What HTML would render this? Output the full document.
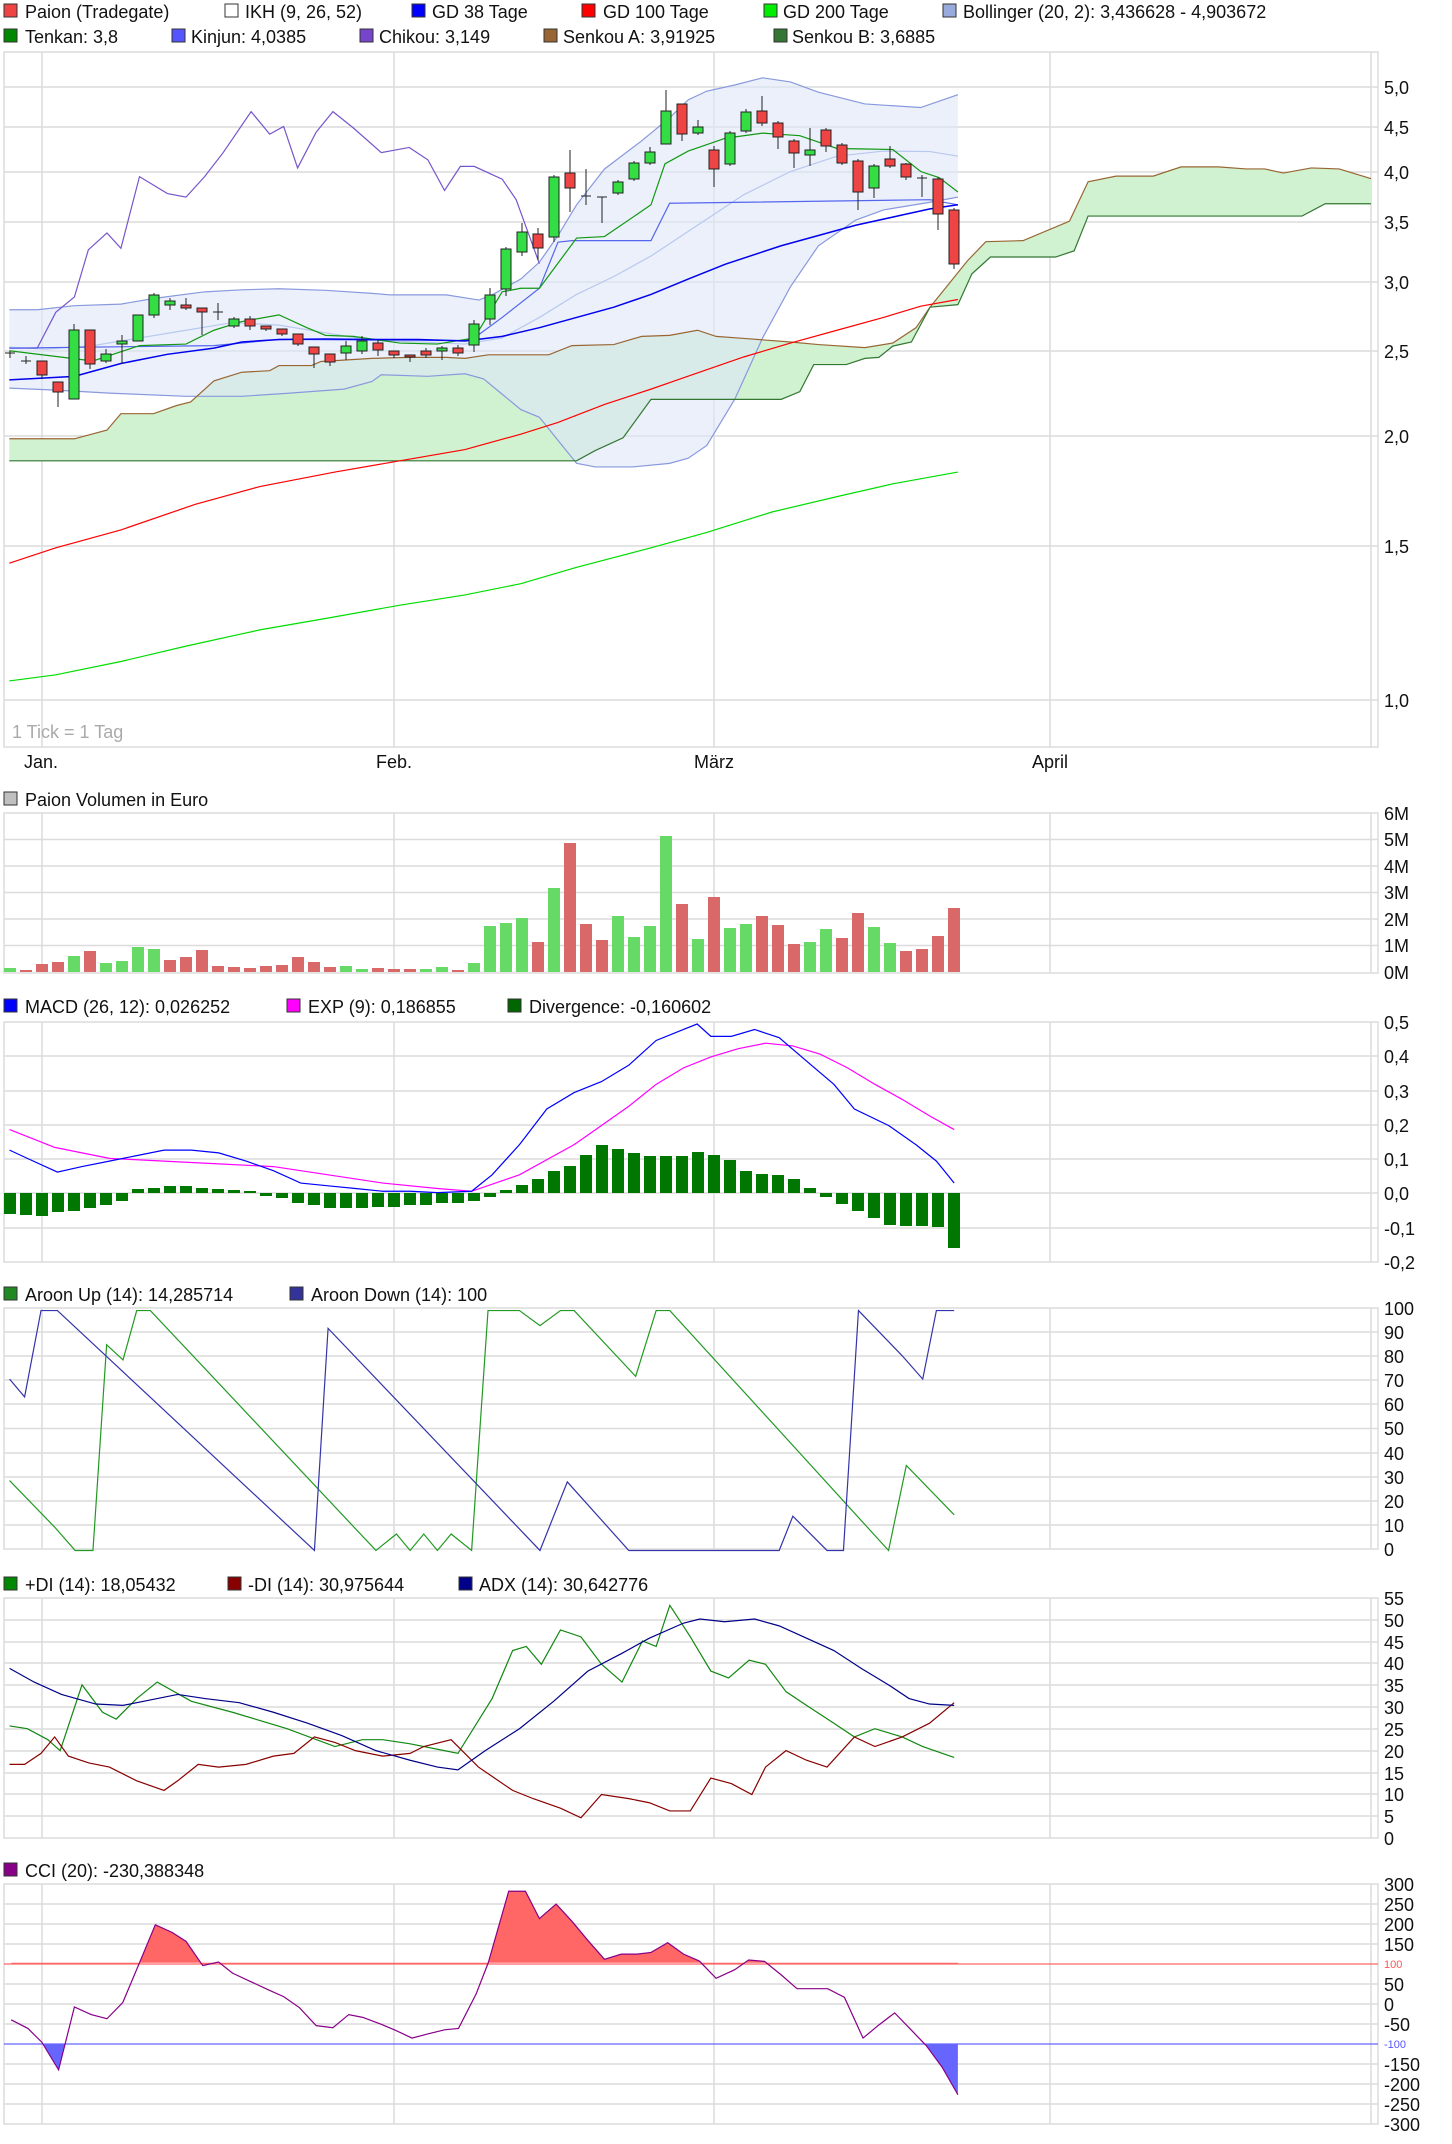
<!DOCTYPE html>
<html><head><meta charset="utf-8"><style>
html,body{margin:0;padding:0;background:#fff}
svg{display:block}
text{font-family:"Liberation Sans",Arial,sans-serif;font-size:18px;fill:#111}
.g{stroke:#dcdcdc;stroke-width:1.5;fill:none}
.ln{fill:none;vector-effect:non-scaling-stroke;stroke-width:1.2}
.ax{dominant-baseline:central}
</style></head><body>
<svg width="1452" height="2144" viewBox="0 0 1452 2144" xmlns="http://www.w3.org/2000/svg">
<defs>
<clipPath id="cm"><rect x="4" y="52" width="1367" height="695"/></clipPath>
<clipPath id="cciU"><rect x="0" y="1884" width="1378" height="80"/></clipPath>
<clipPath id="cciD"><rect x="0" y="2044" width="1378" height="80"/></clipPath>
</defs>

<!-- legend main -->
<g>
<rect x="4" y="4" width="13" height="13" fill="#ee4444" stroke="#333"/><text x="25" y="18">Paion (Tradegate)</text>
<rect x="225" y="4" width="13" height="13" fill="#fff" stroke="#333"/><text x="245" y="18">IKH (9, 26, 52)</text>
<rect x="412" y="4" width="13" height="13" fill="#0000ff" stroke="#333"/><text x="432" y="18">GD 38 Tage</text>
<rect x="582" y="4" width="13" height="13" fill="#ff0000" stroke="#333"/><text x="603" y="18">GD 100 Tage</text>
<rect x="764" y="4" width="13" height="13" fill="#00ee00" stroke="#333"/><text x="783" y="18">GD 200 Tage</text>
<rect x="943" y="4" width="13" height="13" fill="#99aadd" stroke="#333"/><text x="963" y="18">Bollinger (20, 2): 3,436628 - 4,903672</text>
<rect x="4" y="29" width="13" height="13" fill="#008800" stroke="#333"/><text x="25" y="43">Tenkan: 3,8</text>
<rect x="172" y="29" width="13" height="13" fill="#5555ff" stroke="#333"/><text x="191" y="43">Kinjun: 4,0385</text>
<rect x="360" y="29" width="13" height="13" fill="#7744cc" stroke="#333"/><text x="379" y="43">Chikou: 3,149</text>
<rect x="544" y="29" width="13" height="13" fill="#996633" stroke="#333"/><text x="563" y="43">Senkou A: 3,91925</text>
<rect x="774" y="29" width="13" height="13" fill="#337733" stroke="#333"/><text x="792" y="43">Senkou B: 3,6885</text>
</g>

<!-- main frame -->
<rect x="4" y="52" width="1374" height="695" class="g"/>
<g class="g">
<line x1="4" y1="87" x2="1378" y2="87"/><line x1="4" y1="127" x2="1378" y2="127"/><line x1="4" y1="172" x2="1378" y2="172"/><line x1="4" y1="222" x2="1378" y2="222"/><line x1="4" y1="282" x2="1378" y2="282"/><line x1="4" y1="351" x2="1378" y2="351"/><line x1="4" y1="436" x2="1378" y2="436"/><line x1="4" y1="546" x2="1378" y2="546"/><line x1="4" y1="700" x2="1378" y2="700"/>
<line x1="42" y1="52" x2="42" y2="747"/><line x1="394" y1="52" x2="394" y2="747"/><line x1="714" y1="52" x2="714" y2="747"/><line x1="1050" y1="52" x2="1050" y2="747"/><line x1="1371" y1="52" x2="1371" y2="747"/>
</g>
<g class="ax"><text x="1384" y="88" class="ax">5,0</text><text x="1384" y="128" class="ax">4,5</text><text x="1384" y="173" class="ax">4,0</text><text x="1384" y="223" class="ax">3,5</text><text x="1384" y="283" class="ax">3,0</text><text x="1384" y="352" class="ax">2,5</text><text x="1384" y="437" class="ax">2,0</text><text x="1384" y="547" class="ax">1,5</text><text x="1384" y="701" class="ax">1,0</text></g>
<text x="12" y="738" style="fill:#aaa">1 Tick = 1 Tag</text>
<text x="24" y="768">Jan.</text><text x="394" y="768" text-anchor="middle">Feb.</text><text x="714" y="768" text-anchor="middle">März</text><text x="1050" y="768" text-anchor="middle">April</text>

<g clip-path="url(#cm)">
<g transform="matrix(0.93,0,0,0.512,0,0)">
<!-- cloud -->
<path fill="#d0f2d0" stroke="none" d="M10,857 L80,857 115,840 130,808 165,808 190,792 205,785 230,744 260,727 290,724 300,714 335,714 345,706 400,700 440,698 480,698 500,700 525,693 590,693 615,675 660,673 690,657 720,655 750,645 770,657 800,661 850,668 880,673 930,679 960,670 985,640 1000,600 1040,510 1060,472 1100,470 1150,432 1170,355 1200,344 1240,344 1270,326 1310,326 1340,330 1360,330 1380,338 1410,328 1440,330 1480,352 L1480,398 1425,398 1400,422 1170,422 1155,490 1135,502 1065,502 1045,535 1030,595 1000,600 980,668 960,676 945,698 930,700 910,712 875,712 860,765 840,780 700,780 670,855 640,880 620,900 10,900 Z"/>
<!-- bollinger band -->
<path fill="#dde6f8" fill-opacity="0.6" stroke="none" d="M10,605 40,605 80,597 130,594 165,583 220,570 260,566 300,564 350,567 400,573 420,576 480,576 515,586 530,575 560,545 580,512 600,460 620,400 650,330 690,275 720,230 740,195 760,178 790,166 820,152 850,160 880,180 930,203 990,210 1030,185 L1030,385 1000,395 950,410 920,430 880,480 850,560 820,660 790,780 760,870 740,895 720,905 680,912 640,912 620,905 600,860 580,815 560,800 540,770 520,740 500,730 460,735 410,732 400,745 370,760 310,768 260,774 200,774 120,768 60,762 10,758 Z"/>
<polyline class="ln" stroke="#8899dd" points="10,605 40,605 80,597 130,594 165,583 220,570 260,566 300,564 350,567 400,573 420,576 480,576 515,586 530,575 560,545 580,512 600,460 620,400 650,330 690,275 720,230 740,195 760,178 790,166 820,152 850,160 880,180 930,203 990,210 1030,185"/>
<polyline class="ln" stroke="#8899dd" points="10,758 60,762 120,768 200,774 260,774 310,768 370,760 400,745 410,732 460,735 500,730 520,740 540,770 560,800 580,815 600,860 620,905 640,912 680,912 720,905 740,895 760,870 790,780 820,660 850,560 880,480 920,430 950,410 1000,395 1030,385"/>
<polyline class="ln" stroke="#b8c8ee" points="10,678 50,682 100,675 150,660 200,645 250,630 300,635 350,650 400,665 450,668 500,672 540,660 580,620 620,575 660,540 700,500 750,440 800,380 850,335 900,305 950,295 1000,296 1030,305"/>
<polyline class="ln" stroke="#996633" points="10,857 80,857 115,840 130,808 165,808 190,792 205,785 230,744 260,727 290,724 300,714 335,714 345,706 400,700 440,698 480,698 500,700 525,693 590,693 615,675 660,673 690,657 720,655 750,645 770,657 800,661 850,668 880,673 930,679 960,670 985,640 1000,600 1040,510 1060,472 1100,470 1150,432 1170,355 1200,344 1240,344 1270,326 1310,326 1340,330 1360,330 1380,338 1410,328 1440,330 1480,352"/>
<polyline class="ln" stroke="#337733" points="10,900 620,900 640,880 670,855 700,780 840,780 860,765 875,712 910,712 930,700 945,698 960,676 980,668 1000,600 1030,595 1045,535 1065,502 1135,502 1155,490 1170,422 1400,422 1425,398 1480,398"/>
<polyline class="ln" stroke="#ff0000" points="10,1100 60,1070 130,1035 210,985 280,950 360,922 430,900 500,878 560,848 600,825 650,790 700,760 760,722 800,697 850,670 900,645 950,620 990,598 1030,585"/>
<polyline class="ln" stroke="#00dd00" points="10,1330 60,1318 130,1292 200,1262 280,1230 350,1208 430,1182 500,1162 560,1140 620,1108 700,1070 760,1040 830,1000 900,970 960,945 1030,922"/>
<polyline class="ln" stroke="#7755cc" points="10,680 40,680 60,610 80,580 95,488 115,455 130,485 150,345 180,378 200,385 220,345 240,298 270,218 290,262 305,247 320,328 340,258 358,218 380,250 410,298 440,288 460,312 478,372 495,325 510,325 540,350 555,390 570,465 580,515"/>
<polyline class="ln" stroke="#5566ee" points="10,680 230,675 300,663 500,665 510,660 540,620 580,563 600,473 615,470 700,470 720,397 1000,390 1030,400"/>
<polyline class="ln" stroke="#119911" points="10,685 100,705 150,675 200,672 230,645 260,628 300,615 330,640 350,655 380,657 430,670 470,672 510,660 540,570 560,563 580,563 620,465 650,462 700,400 715,320 740,295 780,270 820,260 860,265 900,290 930,291 960,292 990,335 1010,347 1030,375"/>
<polyline class="ln" stroke="#0000ee" style="stroke-width:1.5" points="10,742 80,735 130,710 180,692 230,680 260,668 300,663 350,662 400,663 450,663 500,666 540,657 580,640 620,620 660,600 700,575 740,545 780,516 840,480 880,460 920,440 970,420 1000,408 1030,400"/>
</g>
<!-- candles -->
<g stroke="#222" stroke-width="1">
<line x1="10" y1="351" x2="10" y2="358"/><line x1="5" y1="353" x2="15" y2="353"/>
<line x1="26" y1="356" x2="26" y2="364"/><line x1="21" y1="361" x2="31" y2="361"/>
<line x1="42" y1="361" x2="42" y2="379"/><rect x="37" y="361" width="10" height="14" fill="#ee4444"/>
<line x1="58" y1="382" x2="58" y2="407"/><rect x="53" y="382" width="10" height="10" fill="#ee4444"/>
<line x1="74" y1="324" x2="74" y2="399"/><rect x="69" y="330" width="10" height="69" fill="#33dd44"/>
<line x1="90" y1="330" x2="90" y2="369"/><rect x="85" y="330" width="10" height="34" fill="#ee4444"/>
<line x1="106" y1="349" x2="106" y2="363"/><rect x="101" y="354" width="10" height="7" fill="#33dd44"/>
<line x1="122" y1="335" x2="122" y2="364"/><rect x="117" y="341" width="10" height="3" fill="#33dd44"/>
<line x1="138" y1="315" x2="138" y2="341"/><rect x="133" y="315" width="10" height="26" fill="#33dd44"/>
<line x1="154" y1="293" x2="154" y2="318"/><rect x="149" y="295" width="10" height="20" fill="#33dd44"/>
<line x1="170" y1="298" x2="170" y2="310"/><rect x="165" y="301" width="10" height="4" fill="#33dd44"/>
<line x1="186" y1="298" x2="186" y2="310"/><rect x="181" y="305" width="10" height="3" fill="#ee4444"/>
<line x1="202" y1="308" x2="202" y2="335"/><rect x="197" y="308" width="10" height="4" fill="#ee4444"/>
<line x1="218" y1="303" x2="218" y2="320"/><line x1="213" y1="312" x2="223" y2="312"/>
<line x1="234" y1="317" x2="234" y2="328"/><rect x="229" y="319" width="10" height="7" fill="#33dd44"/>
<line x1="250" y1="316" x2="250" y2="330"/><rect x="245" y="319" width="10" height="7" fill="#ee4444"/>
<line x1="266" y1="326" x2="266" y2="331"/><rect x="261" y="326" width="10" height="3" fill="#ee4444"/>
<line x1="282" y1="329" x2="282" y2="336"/><rect x="277" y="329" width="10" height="5" fill="#ee4444"/>
<line x1="298" y1="334" x2="298" y2="346"/><rect x="293" y="334" width="10" height="10" fill="#ee4444"/>
<line x1="314" y1="347" x2="314" y2="368"/><rect x="309" y="347" width="10" height="7" fill="#ee4444"/>
<line x1="330" y1="354" x2="330" y2="366"/><rect x="325" y="354" width="10" height="8" fill="#ee4444"/>
<line x1="346" y1="341" x2="346" y2="360"/><rect x="341" y="346" width="10" height="7" fill="#33dd44"/>
<line x1="362" y1="336" x2="362" y2="354"/><rect x="357" y="341" width="10" height="10" fill="#33dd44"/>
<line x1="378" y1="340" x2="378" y2="356"/><rect x="373" y="343" width="10" height="7" fill="#ee4444"/>
<line x1="394" y1="351" x2="394" y2="358"/><rect x="389" y="351" width="10" height="4" fill="#ee4444"/>
<line x1="410" y1="355" x2="410" y2="362"/><rect x="405" y="355" width="10" height="2" fill="#ee4444"/>
<line x1="426" y1="348" x2="426" y2="358"/><rect x="421" y="351" width="10" height="4" fill="#ee4444"/>
<line x1="442" y1="346" x2="442" y2="360"/><rect x="437" y="348" width="10" height="3" fill="#33dd44"/>
<line x1="458" y1="345" x2="458" y2="356"/><rect x="453" y="348" width="10" height="5" fill="#ee4444"/>
<line x1="474" y1="320" x2="474" y2="352"/><rect x="469" y="324" width="10" height="21" fill="#33dd44"/>
<line x1="490" y1="288" x2="490" y2="325"/><rect x="485" y="295" width="10" height="24" fill="#33dd44"/>
<line x1="506" y1="247" x2="506" y2="296"/><rect x="501" y="249" width="10" height="40" fill="#33dd44"/>
<line x1="522" y1="223" x2="522" y2="256"/><rect x="517" y="232" width="10" height="20" fill="#33dd44"/>
<line x1="538" y1="228" x2="538" y2="260"/><rect x="533" y="234" width="10" height="14" fill="#ee4444"/>
<line x1="554" y1="175" x2="554" y2="242"/><rect x="549" y="177" width="10" height="60" fill="#33dd44"/>
<line x1="570" y1="150" x2="570" y2="212"/><rect x="565" y="173" width="10" height="15" fill="#ee4444"/>
<line x1="586" y1="169" x2="586" y2="205"/><line x1="581" y1="196" x2="591" y2="196"/>
<line x1="602" y1="197" x2="602" y2="223"/><line x1="597" y1="197" x2="607" y2="197"/>
<line x1="618" y1="180" x2="618" y2="195"/><rect x="613" y="182" width="10" height="11" fill="#33dd44"/>
<line x1="634" y1="161" x2="634" y2="181"/><rect x="629" y="163" width="10" height="16" fill="#33dd44"/>
<line x1="650" y1="147" x2="650" y2="165"/><rect x="645" y="152" width="10" height="11" fill="#33dd44"/>
<line x1="666" y1="90" x2="666" y2="144"/><rect x="661" y="111" width="10" height="33" fill="#33dd44"/>
<line x1="682" y1="104" x2="682" y2="141"/><rect x="677" y="104" width="10" height="30" fill="#ee4444"/>
<line x1="698" y1="120" x2="698" y2="135"/><rect x="693" y="127" width="10" height="6" fill="#33dd44"/>
<line x1="714" y1="146" x2="714" y2="187"/><rect x="709" y="150" width="10" height="19" fill="#ee4444"/>
<line x1="730" y1="131" x2="730" y2="166"/><rect x="725" y="133" width="10" height="31" fill="#33dd44"/>
<line x1="746" y1="109" x2="746" y2="133"/><rect x="741" y="112" width="10" height="19" fill="#33dd44"/>
<line x1="762" y1="96" x2="762" y2="126"/><rect x="757" y="111" width="10" height="12" fill="#ee4444"/>
<line x1="778" y1="121" x2="778" y2="149"/><rect x="773" y="123" width="10" height="14" fill="#ee4444"/>
<line x1="794" y1="139" x2="794" y2="168"/><rect x="789" y="141" width="10" height="12" fill="#ee4444"/>
<line x1="810" y1="128" x2="810" y2="166"/><rect x="805" y="150" width="10" height="5" fill="#33dd44"/>
<line x1="826" y1="128" x2="826" y2="152"/><rect x="821" y="130" width="10" height="16" fill="#ee4444"/>
<line x1="842" y1="143" x2="842" y2="165"/><rect x="837" y="145" width="10" height="18" fill="#ee4444"/>
<line x1="858" y1="159" x2="858" y2="210"/><rect x="853" y="161" width="10" height="31" fill="#ee4444"/>
<line x1="874" y1="164" x2="874" y2="198"/><rect x="869" y="166" width="10" height="22" fill="#33dd44"/>
<line x1="890" y1="146" x2="890" y2="168"/><rect x="885" y="159" width="10" height="7" fill="#ee4444"/>
<line x1="906" y1="163" x2="906" y2="180"/><rect x="901" y="164" width="10" height="13" fill="#ee4444"/>
<line x1="922" y1="175" x2="922" y2="197"/><line x1="917" y1="178" x2="927" y2="178"/>
<line x1="938" y1="177" x2="938" y2="230"/><rect x="933" y="179" width="10" height="35" fill="#ee4444"/>
<line x1="954" y1="208" x2="954" y2="269"/><rect x="949" y="210" width="10" height="54" fill="#ee4444"/>
</g>
</g>

<!-- Volume -->
<rect x="4" y="792" width="13" height="13" fill="#c0c0c0" stroke="#333"/><text x="25" y="806">Paion Volumen in Euro</text>
<rect x="4" y="813" width="1374" height="160" class="g"/>
<g class="g">
<line x1="4" y1="839.5" x2="1378" y2="839.5"/><line x1="4" y1="866" x2="1378" y2="866"/><line x1="4" y1="892.5" x2="1378" y2="892.5"/><line x1="4" y1="919" x2="1378" y2="919"/><line x1="4" y1="945.5" x2="1378" y2="945.5"/>
<line x1="42" y1="813" x2="42" y2="973"/><line x1="394" y1="813" x2="394" y2="973"/><line x1="714" y1="813" x2="714" y2="973"/><line x1="1050" y1="813" x2="1050" y2="973"/><line x1="1371" y1="813" x2="1371" y2="973"/>
</g>
<g><text x="1384" y="814" class="ax">6M</text><text x="1384" y="840" class="ax">5M</text><text x="1384" y="867" class="ax">4M</text><text x="1384" y="893" class="ax">3M</text><text x="1384" y="920" class="ax">2M</text><text x="1384" y="946" class="ax">1M</text><text x="1384" y="973" class="ax">0M</text></g>
<g>
<rect x="4" y="968" width="12" height="4" fill="#66d966"/><rect x="20" y="970" width="12" height="2" fill="#d96868"/><rect x="36" y="964" width="12" height="8" fill="#d96868"/><rect x="52" y="962" width="12" height="10" fill="#d96868"/><rect x="68" y="956" width="12" height="16" fill="#66d966"/><rect x="84" y="951" width="12" height="21" fill="#d96868"/><rect x="100" y="963" width="12" height="9" fill="#66d966"/><rect x="116" y="961" width="12" height="11" fill="#66d966"/><rect x="132" y="947" width="12" height="25" fill="#66d966"/><rect x="148" y="949" width="12" height="23" fill="#66d966"/>
<rect x="164" y="960" width="12" height="12" fill="#d96868"/><rect x="180" y="957" width="12" height="15" fill="#d96868"/><rect x="196" y="950" width="12" height="22" fill="#d96868"/><rect x="212" y="966" width="12" height="6" fill="#d96868"/><rect x="228" y="967" width="12" height="5" fill="#d96868"/><rect x="244" y="968" width="12" height="4" fill="#d96868"/><rect x="260" y="966" width="12" height="6" fill="#d96868"/><rect x="276" y="965" width="12" height="7" fill="#d96868"/><rect x="292" y="957" width="12" height="15" fill="#d96868"/><rect x="308" y="962" width="12" height="10" fill="#d96868"/>
<rect x="324" y="967" width="12" height="5" fill="#d96868"/><rect x="340" y="966" width="12" height="6" fill="#66d966"/><rect x="356" y="969" width="12" height="3" fill="#66d966"/><rect x="372" y="968" width="12" height="4" fill="#d96868"/><rect x="388" y="969" width="12" height="3" fill="#d96868"/><rect x="404" y="969" width="12" height="3" fill="#d96868"/><rect x="420" y="969" width="12" height="3" fill="#66d966"/><rect x="436" y="967" width="12" height="5" fill="#66d966"/><rect x="452" y="970" width="12" height="2" fill="#d96868"/><rect x="468" y="963" width="12" height="9" fill="#66d966"/>
<rect x="484" y="926" width="12" height="46" fill="#66d966"/><rect x="500" y="923" width="12" height="49" fill="#66d966"/><rect x="516" y="918" width="12" height="54" fill="#66d966"/><rect x="532" y="942" width="12" height="30" fill="#d96868"/><rect x="548" y="888" width="12" height="84" fill="#66d966"/><rect x="564" y="843" width="12" height="129" fill="#d96868"/><rect x="580" y="924" width="12" height="48" fill="#d96868"/><rect x="596" y="940" width="12" height="32" fill="#d96868"/><rect x="612" y="916" width="12" height="56" fill="#66d966"/><rect x="628" y="937" width="12" height="35" fill="#66d966"/>
<rect x="644" y="926" width="12" height="46" fill="#66d966"/><rect x="660" y="836" width="12" height="136" fill="#66d966"/><rect x="676" y="904" width="12" height="68" fill="#d96868"/><rect x="692" y="939" width="12" height="33" fill="#66d966"/><rect x="708" y="897" width="12" height="75" fill="#d96868"/><rect x="724" y="928" width="12" height="44" fill="#66d966"/><rect x="740" y="924" width="12" height="48" fill="#66d966"/><rect x="756" y="916" width="12" height="56" fill="#d96868"/><rect x="772" y="925" width="12" height="47" fill="#d96868"/><rect x="788" y="944" width="12" height="28" fill="#d96868"/>
<rect x="804" y="942" width="12" height="30" fill="#66d966"/><rect x="820" y="929" width="12" height="43" fill="#66d966"/><rect x="836" y="938" width="12" height="34" fill="#d96868"/><rect x="852" y="913" width="12" height="59" fill="#d96868"/><rect x="868" y="927" width="12" height="45" fill="#66d966"/><rect x="884" y="943" width="12" height="29" fill="#66d966"/><rect x="900" y="951" width="12" height="21" fill="#d96868"/><rect x="916" y="949" width="12" height="23" fill="#d96868"/><rect x="932" y="936" width="12" height="36" fill="#d96868"/><rect x="948" y="908" width="12" height="64" fill="#d96868"/>
</g>

<!-- MACD -->
<rect x="4" y="999" width="13" height="13" fill="#0000ff" stroke="#333"/><text x="25" y="1013">MACD (26, 12): 0,026252</text>
<rect x="287" y="999" width="13" height="13" fill="#ff00ff" stroke="#333"/><text x="308" y="1013">EXP (9): 0,186855</text>
<rect x="508" y="999" width="13" height="13" fill="#006600" stroke="#333"/><text x="529" y="1013">Divergence: -0,160602</text>
<rect x="4" y="1022" width="1374" height="240" class="g"/>
<g class="g">
<line x1="4" y1="1056" x2="1378" y2="1056"/><line x1="4" y1="1091" x2="1378" y2="1091"/><line x1="4" y1="1125" x2="1378" y2="1125"/><line x1="4" y1="1159" x2="1378" y2="1159"/><line x1="4" y1="1193" x2="1378" y2="1193"/><line x1="4" y1="1228" x2="1378" y2="1228"/>
<line x1="42" y1="1022" x2="42" y2="1262"/><line x1="394" y1="1022" x2="394" y2="1262"/><line x1="714" y1="1022" x2="714" y2="1262"/><line x1="1050" y1="1022" x2="1050" y2="1262"/><line x1="1371" y1="1022" x2="1371" y2="1262"/>
</g>
<g><text x="1384" y="1023" class="ax">0,5</text><text x="1384" y="1057" class="ax">0,4</text><text x="1384" y="1092" class="ax">0,3</text><text x="1384" y="1126" class="ax">0,2</text><text x="1384" y="1160" class="ax">0,1</text><text x="1384" y="1194" class="ax">0,0</text><text x="1384" y="1229" class="ax">-0,1</text><text x="1384" y="1263" class="ax">-0,2</text></g>
<g fill="#007700">
<rect x="4" y="1193" width="12" height="21"/><rect x="20" y="1193" width="12" height="22"/><rect x="36" y="1193" width="12" height="23"/><rect x="52" y="1193" width="12" height="19"/><rect x="68" y="1193" width="12" height="18"/><rect x="84" y="1193" width="12" height="15"/><rect x="100" y="1193" width="12" height="12"/><rect x="116" y="1193" width="12" height="8"/><rect x="132" y="1189" width="12" height="4"/><rect x="148" y="1188" width="12" height="5"/>
<rect x="164" y="1186" width="12" height="7"/><rect x="180" y="1186" width="12" height="7"/><rect x="196" y="1188" width="12" height="5"/><rect x="212" y="1189" width="12" height="4"/><rect x="228" y="1190" width="12" height="3"/><rect x="244" y="1191" width="12" height="2"/><rect x="260" y="1193" width="12" height="3"/><rect x="276" y="1193" width="12" height="5"/><rect x="292" y="1193" width="12" height="10"/><rect x="308" y="1193" width="12" height="12"/>
<rect x="324" y="1193" width="12" height="15"/><rect x="340" y="1193" width="12" height="15"/><rect x="356" y="1193" width="12" height="15"/><rect x="372" y="1193" width="12" height="14"/><rect x="388" y="1193" width="12" height="14"/><rect x="404" y="1193" width="12" height="12"/><rect x="420" y="1193" width="12" height="12"/><rect x="436" y="1193" width="12" height="10"/><rect x="452" y="1193" width="12" height="10"/><rect x="468" y="1193" width="12" height="8"/>
<rect x="484" y="1193" width="12" height="4"/><rect x="500" y="1190" width="12" height="3"/><rect x="516" y="1185" width="12" height="8"/><rect x="532" y="1179" width="12" height="14"/><rect x="548" y="1171" width="12" height="22"/><rect x="564" y="1166" width="12" height="27"/><rect x="580" y="1155" width="12" height="38"/><rect x="596" y="1145" width="12" height="48"/><rect x="612" y="1149" width="12" height="44"/><rect x="628" y="1153" width="12" height="40"/>
<rect x="644" y="1156" width="12" height="37"/><rect x="660" y="1156" width="12" height="37"/><rect x="676" y="1156" width="12" height="37"/><rect x="692" y="1152" width="12" height="41"/><rect x="708" y="1155" width="12" height="38"/><rect x="724" y="1160" width="12" height="33"/><rect x="740" y="1171" width="12" height="22"/><rect x="756" y="1174" width="12" height="19"/><rect x="772" y="1175" width="12" height="18"/><rect x="788" y="1179" width="12" height="14"/>
<rect x="804" y="1188" width="12" height="5"/><rect x="820" y="1193" width="12" height="4"/><rect x="836" y="1193" width="12" height="11"/><rect x="852" y="1193" width="12" height="18"/><rect x="868" y="1193" width="12" height="25"/><rect x="884" y="1193" width="12" height="32"/><rect x="900" y="1193" width="12" height="33"/><rect x="916" y="1193" width="12" height="33"/><rect x="932" y="1193" width="12" height="34"/><rect x="948" y="1193" width="12" height="55"/>
</g>
<g transform="matrix(1.367,0,0,1.371,0,-1.5)">
<polyline class="ln" stroke="#ff00ff" points="7,825 40,838 80,846 120,848 160,850 200,852 240,858 280,864 320,868 345,870 380,858 420,836 440,822 460,808 480,792 500,780 520,772 540,766 560,762 580,764 600,770 620,780 640,792 660,803 680,815 698,825"/>
<polyline class="ln" stroke="#0000ff" points="7,840 20,846 42,856 60,852 80,848 100,844 120,840 140,840 160,842 180,848 200,855 220,864 240,866 260,868 280,870 300,870 320,871 345,870 360,858 380,836 400,810 420,798 440,790 460,778 480,760 500,752 510,748 520,757 535,757 552,752 570,758 590,775 610,792 625,810 650,822 670,836 685,848 698,864"/>
</g>

<!-- Aroon -->
<rect x="4" y="1287" width="13" height="13" fill="#228822" stroke="#333"/><text x="25" y="1301">Aroon Up (14): 14,285714</text>
<rect x="290" y="1287" width="13" height="13" fill="#333399" stroke="#333"/><text x="311" y="1301">Aroon Down (14): 100</text>
<rect x="4" y="1308" width="1374" height="241" class="g"/>
<g class="g">
<line x1="4" y1="1332" x2="1378" y2="1332"/><line x1="4" y1="1356" x2="1378" y2="1356"/><line x1="4" y1="1380" x2="1378" y2="1380"/><line x1="4" y1="1404" x2="1378" y2="1404"/><line x1="4" y1="1428.5" x2="1378" y2="1428.5"/><line x1="4" y1="1453" x2="1378" y2="1453"/><line x1="4" y1="1477" x2="1378" y2="1477"/><line x1="4" y1="1501" x2="1378" y2="1501"/><line x1="4" y1="1525" x2="1378" y2="1525"/>
<line x1="42" y1="1308" x2="42" y2="1549"/><line x1="394" y1="1308" x2="394" y2="1549"/><line x1="714" y1="1308" x2="714" y2="1549"/><line x1="1050" y1="1308" x2="1050" y2="1549"/><line x1="1371" y1="1308" x2="1371" y2="1549"/>
</g>
<g><text x="1384" y="1309" class="ax">100</text><text x="1384" y="1333" class="ax">90</text><text x="1384" y="1357" class="ax">80</text><text x="1384" y="1381" class="ax">70</text><text x="1384" y="1405" class="ax">60</text><text x="1384" y="1429" class="ax">50</text><text x="1384" y="1454" class="ax">40</text><text x="1384" y="1478" class="ax">30</text><text x="1384" y="1502" class="ax">20</text><text x="1384" y="1526" class="ax">10</text><text x="1384" y="1550" class="ax">0</text></g>
<g transform="matrix(1.367,0,0,1.371,0,-1.5)">
<polyline class="ln" stroke="#229922" points="7,1081 40,1115 55,1132 68,1132 78,982 90,993 100,957 110,957 275,1132 290,1120 300,1132 310,1120 320,1132 330,1120 345,1132 357,957 380,957 395,968 410,957 420,957 465,1005 480,957 490,957 650,1132 663,1070 698,1106"/>
<polyline class="ln" stroke="#3333aa" points="7,1007 18,1020 30,957 42,957 230,1132 240,970 395,1132 415,1082 460,1132 570,1132 580,1107 605,1132 617,1132 628,957 660,990 675,1007 685,957 698,957"/>
</g>

<!-- ADX -->
<rect x="4" y="1577" width="13" height="13" fill="#008800" stroke="#333"/><text x="25" y="1591">+DI (14): 18,05432</text>
<rect x="228" y="1577" width="13" height="13" fill="#880000" stroke="#333"/><text x="248" y="1591">-DI (14): 30,975644</text>
<rect x="459" y="1577" width="13" height="13" fill="#000088" stroke="#333"/><text x="479" y="1591">ADX (14): 30,642776</text>
<rect x="4" y="1598" width="1374" height="240" class="g"/>
<g class="g">
<line x1="4" y1="1620" x2="1378" y2="1620"/><line x1="4" y1="1642" x2="1378" y2="1642"/><line x1="4" y1="1663" x2="1378" y2="1663"/><line x1="4" y1="1685" x2="1378" y2="1685"/><line x1="4" y1="1707" x2="1378" y2="1707"/><line x1="4" y1="1729" x2="1378" y2="1729"/><line x1="4" y1="1751" x2="1378" y2="1751"/><line x1="4" y1="1773" x2="1378" y2="1773"/><line x1="4" y1="1794" x2="1378" y2="1794"/><line x1="4" y1="1816" x2="1378" y2="1816"/>
<line x1="42" y1="1598" x2="42" y2="1838"/><line x1="394" y1="1598" x2="394" y2="1838"/><line x1="714" y1="1598" x2="714" y2="1838"/><line x1="1050" y1="1598" x2="1050" y2="1838"/><line x1="1371" y1="1598" x2="1371" y2="1838"/>
</g>
<g><text x="1384" y="1599" class="ax">55</text><text x="1384" y="1621" class="ax">50</text><text x="1384" y="1643" class="ax">45</text><text x="1384" y="1664" class="ax">40</text><text x="1384" y="1686" class="ax">35</text><text x="1384" y="1708" class="ax">30</text><text x="1384" y="1730" class="ax">25</text><text x="1384" y="1752" class="ax">20</text><text x="1384" y="1774" class="ax">15</text><text x="1384" y="1795" class="ax">10</text><text x="1384" y="1817" class="ax">5</text><text x="1384" y="1839" class="ax">0</text></g>
<g transform="matrix(1.367,0,0,1.371,0,-1.5)">
<polyline class="ln" stroke="#118811" points="7,1260 20,1262 35,1270 44,1278 60,1230 75,1250 85,1255 100,1240 115,1228 140,1242 170,1250 210,1262 245,1275 265,1270 280,1270 300,1273 320,1277 335,1280 360,1240 375,1205 385,1202 396,1215 410,1190 425,1195 440,1215 455,1228 470,1198 480,1202 490,1172 505,1195 520,1220 533,1225 548,1212 560,1215 575,1235 590,1245 610,1258 625,1268 640,1262 660,1268 675,1275 698,1283"/>
<polyline class="ln" stroke="#880000" points="7,1288 18,1288 30,1280 40,1268 50,1282 65,1287 80,1290 100,1300 120,1307 130,1300 145,1288 160,1290 180,1288 200,1282 215,1280 230,1268 245,1272 260,1278 280,1282 300,1280 310,1275 330,1270 350,1290 375,1307 390,1313 410,1320 425,1327 440,1310 460,1313 475,1316 490,1322 505,1322 520,1298 535,1302 550,1310 560,1290 575,1278 590,1285 605,1290 625,1268 640,1275 660,1268 680,1258 698,1243"/>
<polyline class="ln" stroke="#000088" points="7,1218 25,1228 45,1237 70,1244 90,1245 110,1241 130,1237 150,1240 175,1243 200,1250 225,1258 250,1267 275,1278 300,1285 320,1290 335,1292 355,1278 380,1262 405,1242 430,1220 455,1207 475,1196 500,1185 512,1182 530,1184 552,1182 570,1187 590,1196 610,1205 630,1218 650,1230 665,1240 680,1244 698,1245"/>
</g>

<!-- CCI -->
<rect x="4" y="1863" width="13" height="13" fill="#880088" stroke="#333"/><text x="25" y="1877">CCI (20): -230,388348</text>
<rect x="4" y="1884" width="1374" height="240" class="g"/>
<g class="g">
<line x1="4" y1="1904" x2="1378" y2="1904"/><line x1="4" y1="1924" x2="1378" y2="1924"/><line x1="4" y1="1944" x2="1378" y2="1944"/><line x1="4" y1="1984" x2="1378" y2="1984"/><line x1="4" y1="2004" x2="1378" y2="2004"/><line x1="4" y1="2024" x2="1378" y2="2024"/><line x1="4" y1="2064" x2="1378" y2="2064"/><line x1="4" y1="2084" x2="1378" y2="2084"/><line x1="4" y1="2104" x2="1378" y2="2104"/>
<line x1="42" y1="1884" x2="42" y2="2124"/><line x1="394" y1="1884" x2="394" y2="2124"/><line x1="714" y1="1884" x2="714" y2="2124"/><line x1="1050" y1="1884" x2="1050" y2="2124"/><line x1="1371" y1="1884" x2="1371" y2="2124"/>
</g>
<line x1="4" y1="1964" x2="1378" y2="1964" stroke="#ff6666" stroke-width="1.2"/>
<line x1="4" y1="2044" x2="1378" y2="2044" stroke="#6666ff" stroke-width="1.2"/>
<g><text x="1384" y="1885" class="ax">300</text><text x="1384" y="1905" class="ax">250</text><text x="1384" y="1925" class="ax">200</text><text x="1384" y="1945" class="ax">150</text><text x="1384" y="1965" class="ax" style="font-size:11px;fill:#ff5555">100</text><text x="1384" y="1985" class="ax">50</text><text x="1384" y="2005" class="ax">0</text><text x="1384" y="2025" class="ax">-50</text><text x="1384" y="2045" class="ax" style="font-size:11px;fill:#5555ff">-100</text><text x="1384" y="2065" class="ax">-150</text><text x="1384" y="2085" class="ax">-200</text><text x="1384" y="2105" class="ax">-250</text><text x="1384" y="2125" class="ax">-300</text></g>
<g transform="matrix(0.93,0,0,0.3455,0,1600)">
<g clip-path="url(#cciU)"></g>
</g>
<g clip-path="url(#cciU)"><g transform="matrix(0.93,0,0,0.3455,0,1600)">
<path fill="#ff6666" d="M12,1050 L12,1215 30,1240 45,1280 63,1360 80,1178 98,1200 115,1212 132,1165 150,1050 167,940 185,962 200,988 218,1058 235,1048 250,1080 270,1105 290,1130 305,1148 322,1180 340,1232 358,1238 375,1200 390,1208 410,1228 425,1245 443,1268 460,1256 478,1244 493,1240 512,1140 525,1050 547,843 565,843 580,922 598,880 615,930 632,985 650,1040 668,1025 685,1025 700,1020 718,992 735,1025 752,1045 770,1095 790,1070 805,1042 822,1046 840,1085 857,1125 875,1125 890,1125 908,1150 928,1268 945,1230 962,1195 980,1245 996,1290 1013,1352 1030,1432 L1030,1050 Z"/>
</g></g>
<g clip-path="url(#cciD)"><g transform="matrix(0.93,0,0,0.3455,0,1600)">
<path fill="#6666ff" d="M12,1282 L12,1215 30,1240 45,1280 63,1360 80,1178 98,1200 115,1212 132,1165 150,1050 167,940 185,962 200,988 218,1058 235,1048 250,1080 270,1105 290,1130 305,1148 322,1180 340,1232 358,1238 375,1200 390,1208 410,1228 425,1245 443,1268 460,1256 478,1244 493,1240 512,1140 525,1050 547,843 565,843 580,922 598,880 615,930 632,985 650,1040 668,1025 685,1025 700,1020 718,992 735,1025 752,1045 770,1095 790,1070 805,1042 822,1046 840,1085 857,1125 875,1125 890,1125 908,1150 928,1268 945,1230 962,1195 980,1245 996,1290 1013,1352 1030,1432 L1030,1282 Z"/>
</g></g>
<g transform="matrix(0.93,0,0,0.3455,0,1600)">
<polyline class="ln" stroke="#880088" points="12,1215 30,1240 45,1280 63,1360 80,1178 98,1200 115,1212 132,1165 150,1050 167,940 185,962 200,988 218,1058 235,1048 250,1080 270,1105 290,1130 305,1148 322,1180 340,1232 358,1238 375,1200 390,1208 410,1228 425,1245 443,1268 460,1256 478,1244 493,1240 512,1140 525,1050 547,843 565,843 580,922 598,880 615,930 632,985 650,1040 668,1025 685,1025 700,1020 718,992 735,1025 752,1045 770,1095 790,1070 805,1042 822,1046 840,1085 857,1125 875,1125 890,1125 908,1150 928,1268 945,1230 962,1195 980,1245 996,1290 1013,1352 1030,1432"/>
</g>
</svg>
</body></html>
